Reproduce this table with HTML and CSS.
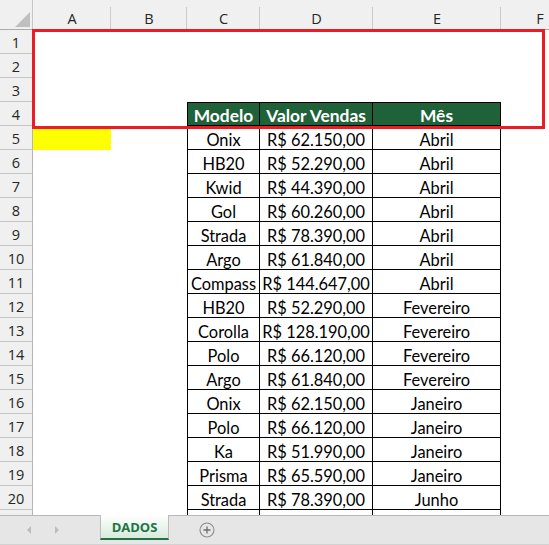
FILE: index.html
```html
<!DOCTYPE html>
<html lang="pt">
<head>
<meta charset="utf-8">
<title>DADOS</title>
<link rel="stylesheet" href="styles.css">
</head>
<body>
<div class="app">
  <div class="viewport">
    <div class="sheet">
      <div class="corner"><svg width="33" height="30" viewBox="0 0 33 30"><polygon points="30,12 30,27 15,27" fill="#bfbfbf"/></svg></div>
      <div class="ch">A</div><div class="ch">B</div><div class="ch">C</div><div class="ch">D</div><div class="ch">E</div><div class="ch">F</div>

      <div class="rh">1</div><div class="c"></div><div class="c"></div><div class="c"></div><div class="c"></div><div class="c"></div><div class="c"></div>
      <div class="rh">2</div><div class="c"></div><div class="c"></div><div class="c"></div><div class="c"></div><div class="c"></div><div class="c"></div>
      <div class="rh">3</div><div class="c"></div><div class="c"></div><div class="c"></div><div class="c"></div><div class="c"></div><div class="c"></div>
      <div class="rh">4</div><div class="c"></div><div class="c"></div><div class="th first">Modelo</div><div class="th">Valor Vendas</div><div class="th">Mês</div><div class="c"></div>

      <div class="rh">5</div><div class="c yellow"></div><div class="c"></div><div class="t first">Onix</div><div class="t">R$ 62.150,00</div><div class="t">Abril</div><div class="c"></div>
      <div class="rh">6</div><div class="c"></div><div class="c"></div><div class="t first">HB20</div><div class="t">R$ 52.290,00</div><div class="t">Abril</div><div class="c"></div>
      <div class="rh">7</div><div class="c"></div><div class="c"></div><div class="t first">Kwid</div><div class="t">R$ 44.390,00</div><div class="t">Abril</div><div class="c"></div>
      <div class="rh">8</div><div class="c"></div><div class="c"></div><div class="t first">Gol</div><div class="t">R$ 60.260,00</div><div class="t">Abril</div><div class="c"></div>
      <div class="rh">9</div><div class="c"></div><div class="c"></div><div class="t first">Strada</div><div class="t">R$ 78.390,00</div><div class="t">Abril</div><div class="c"></div>
      <div class="rh">10</div><div class="c"></div><div class="c"></div><div class="t first">Argo</div><div class="t">R$ 61.840,00</div><div class="t">Abril</div><div class="c"></div>
      <div class="rh">11</div><div class="c"></div><div class="c"></div><div class="t first">Compass</div><div class="t">R$ 144.647,00</div><div class="t">Abril</div><div class="c"></div>
      <div class="rh">12</div><div class="c"></div><div class="c"></div><div class="t first">HB20</div><div class="t">R$ 52.290,00</div><div class="t">Fevereiro</div><div class="c"></div>
      <div class="rh">13</div><div class="c"></div><div class="c"></div><div class="t first">Corolla</div><div class="t">R$ 128.190,00</div><div class="t">Fevereiro</div><div class="c"></div>
      <div class="rh">14</div><div class="c"></div><div class="c"></div><div class="t first">Polo</div><div class="t">R$ 66.120,00</div><div class="t">Fevereiro</div><div class="c"></div>
      <div class="rh">15</div><div class="c"></div><div class="c"></div><div class="t first">Argo</div><div class="t">R$ 61.840,00</div><div class="t">Fevereiro</div><div class="c"></div>
      <div class="rh">16</div><div class="c"></div><div class="c"></div><div class="t first">Onix</div><div class="t">R$ 62.150,00</div><div class="t">Janeiro</div><div class="c"></div>
      <div class="rh">17</div><div class="c"></div><div class="c"></div><div class="t first">Polo</div><div class="t">R$ 66.120,00</div><div class="t">Janeiro</div><div class="c"></div>
      <div class="rh">18</div><div class="c"></div><div class="c"></div><div class="t first">Ka</div><div class="t">R$ 51.990,00</div><div class="t">Janeiro</div><div class="c"></div>
      <div class="rh">19</div><div class="c"></div><div class="c"></div><div class="t first">Prisma</div><div class="t">R$ 65.590,00</div><div class="t">Janeiro</div><div class="c"></div>
      <div class="rh">20</div><div class="c"></div><div class="c"></div><div class="t first">Strada</div><div class="t">R$ 78.390,00</div><div class="t">Junho</div><div class="c"></div>
      <div class="rh"></div><div class="c"></div><div class="c"></div><div class="t first"></div><div class="t"></div><div class="t"></div><div class="c"></div>
    </div>
    <div class="highlight"></div>
  </div>
  <div class="tabbar">
    <div class="nav">
      <svg width="8" height="10" viewBox="0 0 8 10"><polygon points="6,1 6,9 2,5" fill="#bdbdbd"/></svg>
      <svg width="8" height="10" viewBox="0 0 8 10"><polygon points="2,1 2,9 6,5" fill="#bdbdbd"/></svg>
    </div>
    <div class="tab">DADOS</div>
    <div class="add">
      <svg width="16" height="16" viewBox="0 0 16 16"><circle cx="8" cy="8" r="7" fill="none" stroke="#8c8c8c" stroke-width="1.1"/><path d="M8 4.5v7M4.5 8h7" stroke="#6e6e6e" stroke-width="1.3"/></svg>
    </div>
  </div>
</div>
</body>
</html>
```

FILE: styles.css
```css
* { box-sizing: border-box; }
html, body { margin: 0; padding: 0; background: #fff; }
.app {
  width: 549px;
  height: 545px;
  overflow: hidden;
  display: flex;
  flex-direction: column;
}
.viewport {
  position: relative;
  height: 515px;
  overflow: hidden;
  flex: none;
}
.sheet {
  display: grid;
  grid-template-columns: 33px 78px 76px 73px 113px 128px 78px;
  grid-template-rows: 30px repeat(21, 24px);
  width: 579px;
}
.corner {
  background: #f0f0f0;
  border-bottom: 1px solid #ababab;
  border-right: 1px solid #c6c6c6;
}
.corner svg { display: block; }
.ch {
  background: linear-gradient(#cacaca, #cacaca) right bottom / 1px 22px no-repeat, #f0f0f0;
  border-bottom: 1px solid #ababab;
  font-family: "Open Sans", "DejaVu Sans", sans-serif;
  font-size: 14.5px;
  color: #262626;
  display: flex;
  align-items: center;
  justify-content: center;
  padding-top: 7px;
}
.rh {
  background: #f0f0f0;
  border-bottom: 1px solid #c6c6c6;
  border-right: 1px solid #b5b5b5;
  font-family: "Open Sans", "DejaVu Sans", sans-serif;
  font-size: 14.5px;
  color: #262626;
  display: flex;
  align-items: center;
  justify-content: center;
  padding-top: 1px;
}
.c { background: #fff; }
.yellow { background: #ffff00; }
.t, .th {
  font-family: "Lato", "Liberation Sans", sans-serif;
  font-size: 16.4px;
  color: #000;
  display: flex;
  align-items: center;
  justify-content: center;
  white-space: nowrap;
  border-right: 1px solid #000;
  border-bottom: 1px solid #000;
  padding-top: 3px;
}
.first { border-left: 1px solid #000; }
.th {
  background: #1f6139;
  color: #fff;
  font-weight: 700;
  font-size: 17.4px;
  border-top: 1px solid #000;
  padding-top: 2px;
}
.highlight {
  position: absolute;
  left: 32px;
  top: 29px;
  width: 513px;
  height: 100px;
  border: 3px solid #ed1c24;
}
.tabbar {
  height: 30px;
  flex: none;
  background: #e6e6e6;
  border-top: 1px solid #b9b9b9;
  border-bottom: 1px solid #d2d2d2;
  display: flex;
  align-items: flex-start;
}
.nav {
  width: 100px;
  height: 27px;
  display: flex;
  align-items: center;
  gap: 20px;
  padding-left: 25px;
}
.nav svg { display: block; }
.tab {
  width: 69px;
  height: 25px;
  margin-top: -1px;
  background: linear-gradient(#ffffff, #d7ebdb);
  border-left: 1px solid #bcbcbc;
  border-right: 1px solid #bcbcbc;
  border-bottom: 2px solid #217346;
  color: #217346;
  font-family: "Open Sans", "DejaVu Sans", sans-serif;
  font-weight: 700;
  font-size: 13px;
  display: flex;
  align-items: center;
  justify-content: center;
  padding-top: 1px;
}
.add {
  margin-left: 30px;
  height: 27px;
  display: flex;
  align-items: center;
}
.add svg { display: block; }
```
